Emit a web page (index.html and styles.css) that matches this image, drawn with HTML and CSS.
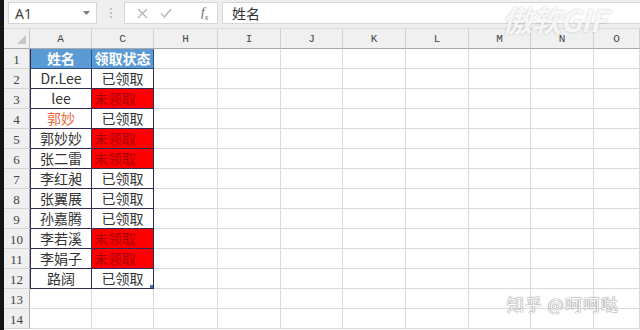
FILE: index.html
```html
<!DOCTYPE html>
<html lang="zh-CN">
<head>
    <meta charset="UTF-8">
    <meta name="viewport" content="width=device-width, initial-scale=1.0">
    <title>领取状态</title>
    <link rel="stylesheet" href="styles.css">
</head>
<body>
    <div class="window">
        <div class="edge"></div>
        <div class="excel">
            <div class="formula-bar">
                <div class="name-box">
                    <span>A1</span>
                    <svg class="caret" width="7" height="4" viewBox="0 0 7 4"><path d="M0 0h7L3.5 4z" fill="#7a7a7a"/></svg>
                </div>
                <div class="grip"><i></i><i></i><i></i></div>
                <div class="fx-buttons">
                    <svg width="11" height="11" viewBox="0 0 11 11"><path d="M1 1l9 9M10 1l-9 9" stroke="#b4b4b4" stroke-width="1.3" fill="none"/></svg>
                    <svg width="12" height="10" viewBox="0 0 12 10"><path d="M1 5.5l3.5 3.5L11 1" stroke="#b4b4b4" stroke-width="1.3" fill="none"/></svg>
                    <span class="fx">f<sub>x</sub></span>
                </div>
                <div class="formula-input">姓名</div>
            </div>
            <div class="sheet" id="sheet"></div>
        </div>
        <div class="mark-gif">傲软GIF</div>
        <div class="mark-zhihu">知乎 @呵呵哒</div>
    </div>
    <script>
        const columns = ['A', 'C', 'H', 'I', 'J', 'K', 'L', 'M', 'N', 'O'];
        const rows = [
            ['姓名', '领取状态'],
            ['Dr.Lee', '已领取'],
            ['lee', '未领取'],
            ['郭妙', '已领取'],
            ['郭妙妙', '未领取'],
            ['张二雷', '未领取'],
            ['李红昶', '已领取'],
            ['张翼展', '已领取'],
            ['孙嘉腾', '已领取'],
            ['李若溪', '未领取'],
            ['李娟子', '未领取'],
            ['路阔', '已领取']
        ];
        const sheet = document.getElementById('sheet');

        function addCell(className, text) {
            const div = document.createElement('div');
            div.className = className;
            if (text) div.textContent = text;
            sheet.appendChild(div);
            return div;
        }

        // column headers
        addCell('corner').innerHTML = '<svg width="9" height="9" viewBox="0 0 9 9"><path d="M9 0v9H0z" fill="#c6c6c6"/></svg>';
        columns.forEach(c => addCell('col-head', c));

        // 14 visible rows
        for (let r = 1; r <= 14; r++) {
            addCell('row-head', r);
            columns.forEach((c, i) => {
                const row = rows[r - 1];
                if (!row || i > 1) {
                    addCell('cell');
                    return;
                }
                let cls = 'cell tbl';
                if (i === 0) cls += ' first';
                if (r === 1) cls += ' head';
                else if (row[i] === '未领取') cls += ' miss';
                else if (row[i] === '郭妙') cls += ' warm';
                const cell = addCell(cls, row[i]);
                if (r === 12 && i === 1) cell.insertAdjacentHTML('beforeend', '<span class="handle"></span>');
            });
        }
    </script>
</body>
</html>
```

FILE: styles.css
```css
* {
    box-sizing: border-box;
}
body {
    margin: 0;
    background: #fff;
    font-family: 'Noto Sans CJK SC', 'Noto Sans', sans-serif;
    color: #333;
    overflow: hidden;
}
.window {
    position: relative;
    display: flex;
    width: 640px;
    height: 330px;
    overflow: hidden;
}
.edge {
    width: 4px;
    background: #151515;
}
.excel {
    flex: 1;
    display: flex;
    flex-direction: column;
    min-width: 0;
}
.formula-bar {
    height: 29px;
    display: flex;
    align-items: flex-start;
    padding: 2px 0 0 4px;
    background: #efefef;
    border-bottom: 1px solid #dcdcdc;
}
.name-box {
    width: 89px;
    height: 22px;
    display: flex;
    align-items: center;
    justify-content: space-between;
    padding: 0 6px 0 6px;
    background: #fff;
    border: 1px solid #d6d6d6;
    font-family: 'Noto Sans', sans-serif;
    font-size: 14px;
    color: #444;
}
.grip {
    width: 27px;
    height: 22px;
    display: flex;
    flex-direction: column;
    align-items: center;
    justify-content: center;
    gap: 2px;
}
.grip i {
    width: 2px;
    height: 2px;
    background: #c4c4c4;
}
.fx-buttons {
    width: 94px;
    height: 22px;
    display: flex;
    align-items: center;
    gap: 12px;
    padding-left: 12px;
    background: #fff;
    border: 1px solid #d6d6d6;
}
.fx {
    margin-left: 17px;
    font-family: 'Liberation Serif', serif;
    font-style: italic;
    font-size: 13px;
    color: #666;
}
.fx sub {
    font-size: 8px;
}
.formula-input {
    flex: 1;
    height: 22px;
    margin-left: 4px;
    padding-left: 9px;
    background: #fff;
    border: 1px solid #d6d6d6;
    border-right: none;
    font-size: 14px;
    line-height: 20px;
    color: #333;
}
.sheet {
    display: grid;
    grid-template-columns: 26px 62px 62px 64px 63px 62px 63px 63px 62px 63px 1fr;
    grid-auto-rows: 20px;
}
.corner,
.col-head,
.row-head {
    background: #f0f0f0;
    color: #444;
}
.corner {
    display: flex;
    align-items: flex-end;
    justify-content: flex-end;
    padding: 0 3px 4px 0;
    border-right: 1px solid #c8c8c8;
    border-bottom: 1px solid #ababab;
}
.col-head {
    display: flex;
    align-items: center;
    justify-content: center;
    font-family: 'Liberation Mono', monospace;
    font-size: 11px;
    border-right: 1px solid #d0d0d0;
    border-bottom: 1px solid #ababab;
}
.row-head {
    display: flex;
    align-items: flex-end;
    justify-content: center;
    font-family: 'Liberation Serif', serif;
    font-size: 13px;
    border-right: 1px solid #ababab;
    border-bottom: 1px solid #d4d4d4;
}
.cell {
    border-right: 1px solid #dadada;
    border-bottom: 1px solid #dadada;
    font-size: 14px;
    line-height: 19px;
    white-space: nowrap;
    overflow: hidden;
}
.tbl {
    position: relative;
    text-align: center;
    color: #333;
    border-color: #2f2b4f;
}
.tbl.first {
    border-left: 1px solid #2f2b4f;
}
.head {
    background: #5b9bd5;
    color: #fff;
    font-weight: bold;
    border-color: #2f4f7f;
}
.miss {
    background: #ff0000;
    color: #a80000;
    text-align: left;
    padding-left: 2px;
}
.warm {
    color: #ec6a3e;
}
.handle {
    position: absolute;
    right: -1px;
    bottom: -1px;
    width: 4px;
    height: 4px;
    background: #3f6fc0;
}
.mark-gif {
    position: absolute;
    left: 502px;
    top: 2px;
    font-size: 30px;
    line-height: 34px;
    font-weight: bold;
    font-style: italic;
    letter-spacing: -1px;
    color: rgba(255, 255, 255, 0.88);
    text-shadow: 0 0 2px rgba(0, 0, 0, 0.25);
}
.mark-zhihu {
    position: absolute;
    left: 507px;
    top: 291px;
    font-size: 17px;
    letter-spacing: 1px;
    color: #fff;
    text-shadow: 0 0 1px #777, 0 0 1px #777;
}
```
